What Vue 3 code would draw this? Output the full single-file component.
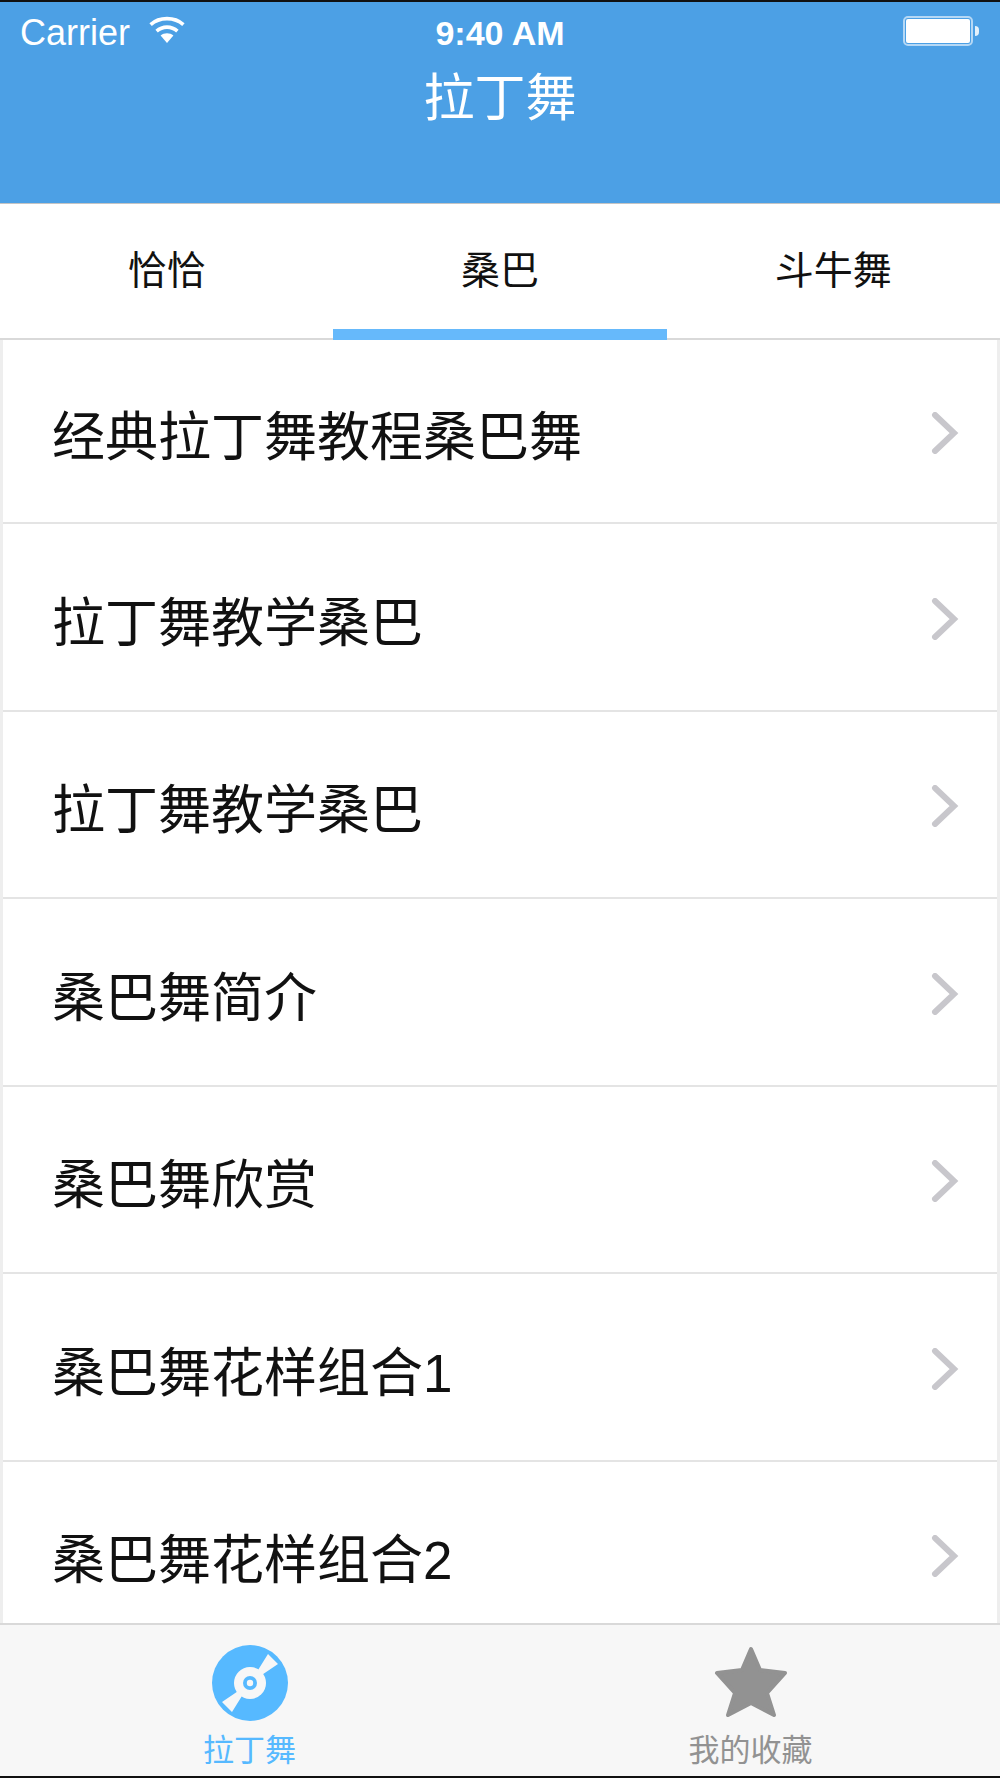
<script setup>
const tabs = [
  { label: '恰恰', active: false },
  { label: '桑巴', active: true },
  { label: '斗牛舞', active: false }
]
const rows = ['经典拉丁舞教程桑巴舞', '拉丁舞教学桑巴', '拉丁舞教学桑巴', '桑巴舞简介', '桑巴舞欣赏', '桑巴舞花样组合1', '桑巴舞花样组合2']
</script>

<template>
  <div class="phone">
    <header class="header">
      <div class="status">
        <div class="status-left">
          <span class="carrier">Carrier</span>
          <svg class="wifi" width="38" height="30" viewBox="0 0 38 30">
            <path d="M19 28 L12.6 20.6 C16 17.6 22 17.6 25.4 20.6 Z" fill="#fff"/>
            <path d="M8.6 16.2 C14.5 10.8 23.5 10.8 29.4 16.2" fill="none" stroke="#fff" stroke-width="3.6"/>
            <path d="M2.6 9.6 C11.5 1.6 26.5 1.6 35.4 9.6" fill="none" stroke="#fff" stroke-width="3.6"/>
          </svg>
        </div>
        <span class="time">9:40 AM</span>
        <div class="battery">
          <div class="battery-body"><div class="battery-fill"></div></div>
          <div class="battery-cap"></div>
        </div>
      </div>
      <h1 class="title">拉丁舞</h1>
    </header>

    <nav class="tabs">
      <div v-for="t in tabs" :key="t.label" class="tab" :class="{ active: t.active }">{{ t.label }}</div>
    </nav>

    <main class="list">
      <div v-for="(r, i) in rows" :key="i" class="row">
        <span class="row-text">{{ r }}</span>
        <svg class="chev" width="30" height="42" viewBox="0 0 30 42">
          <path d="M4 3 L23 21 L4 39" fill="none" stroke="#c8c7cc" stroke-width="6" stroke-linecap="round"/>
        </svg>
      </div>
    </main>

    <footer class="bar">
      <div class="bar-item on">
        <svg class="bar-icon" width="76" height="76" viewBox="0 0 76 76">
          <circle cx="38" cy="38" r="38" fill="#56b9ff"/>
          <path d="M38 38 L56 9 L66 19 Z M38 38 L20 67 L10 57 Z" fill="#f7f7f7"/>
          <circle cx="38" cy="38" r="16" fill="#f7f7f7"/>
          <circle cx="38" cy="38" r="7" fill="#56b9ff"/>
          <circle cx="38" cy="38" r="3.2" fill="#f7f7f7"/>
        </svg>
        <span class="bar-label">拉丁舞</span>
      </div>
      <div class="bar-item">
        <svg class="bar-icon" width="76" height="76" viewBox="0 0 76 76">
          <path d="M38 4 L47 25 L72 28 L54 48 L61 70 L38 58 L15 70 L22 48 L4 28 L29 25 Z" fill="#929292" stroke="#929292" stroke-width="4" stroke-linejoin="round"/>
        </svg>
        <span class="bar-label">我的收藏</span>
      </div>
    </footer>
  </div>
</template>

<style>
html, body { margin: 0; background: #fff; }
</style>

<style scoped>
.phone {
  width: 1000px;
  height: 1778px;
  display: flex;
  flex-direction: column;
  overflow: hidden;
  font-family: "Liberation Sans", "Noto Sans CJK SC", sans-serif;
  background: #fff;
  box-sizing: border-box;
  border-top: 2px solid #111;
  border-bottom: 2px solid #111;
}
.header {
  height: 201px;
  flex: none;
  background: #4ca0e5;
  border-bottom: 1px solid #c4c4c4;
  color: #fff;
  display: flex;
  flex-direction: column;
}
.status {
  height: 62px;
  display: grid;
  grid-template-columns: 1fr auto 1fr;
  align-items: center;
  padding: 0 20px;
}
.status-left { display: flex; align-items: center; gap: 18px; }
.carrier { font-size: 36px; line-height: 62px; }
.wifi { margin-top: -6px; }
.time { font-size: 34px; font-weight: 700; line-height: 62px; margin-left: 0; }
.battery { justify-self: end; display: flex; align-items: center; gap: 2px; margin-top: -4px; margin-right: 1px; }
.battery-body {
  width: 70px;
  height: 30px;
  box-sizing: border-box;
  border: 2px solid #b5d8f5;
  border-radius: 5px;
  padding: 1px;
}
.battery-fill { width: 100%; height: 100%; background: #fff; border-radius: 2px; }
.battery-cap { width: 4px; height: 10px; background: #e4f1fb; border-radius: 0 5px 5px 0; }
.title {
  margin: 0;
  text-align: center;
  font-size: 51px;
  font-weight: 400;
  line-height: 70px;
  padding-top: 0;
}
.tabs {
  height: 136px;
  flex: none;
  display: flex;
  padding: 0;
  background: #fff;
  border-bottom: 2px solid #d9d9d9;
  box-sizing: border-box;
  position: relative;
  z-index: 1;
}
.tab {
  width: 331.5px;
  flex: 1;
  text-align: center;
  font-size: 39px;
  line-height: 134px;
  color: #111;
  box-sizing: border-box;
  padding-bottom: 2px;
  margin-bottom: -2px;
}
.tab.active { border-bottom: 11px solid #66b9fb; }
.list {
  flex: 1;
  min-height: 0;
  overflow: hidden;
  box-sizing: border-box;
  border-left: 3px solid #eee;
  border-right: 3px solid #eee;
}
.row {
  height: 187.5px;
  box-sizing: border-box;
  display: flex;
  align-items: center;
  justify-content: space-between;
  padding: 4px 36px 0 49px;
  border-bottom: 2px solid #e4e4e4;
}
.row:first-child { height: 184px; }
.row-text { font-size: 53px; color: #111; white-space: nowrap; }
.bar {
  height: 153px;
  flex: none;
  box-sizing: border-box;
  background: #f7f7f7;
  border-top: 2px solid #d9d9d9;
  display: flex;
}
.bar-item {
  flex: 1;
  display: flex;
  flex-direction: column;
  align-items: center;
  padding-top: 20px;
  color: #929292;
}
.bar-item.on { color: #56b9ff; }
.bar-label { font-size: 31px; line-height: 40px; margin-top: 10px; }
.bar-item:first-child { padding-right: 2px; }
</style>
